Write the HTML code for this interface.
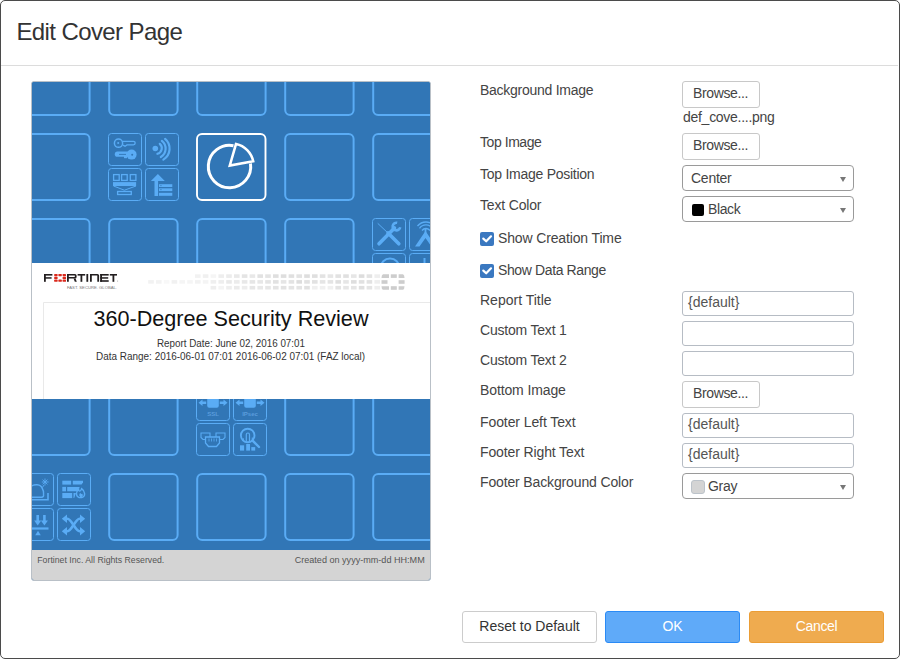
<!DOCTYPE html>
<html><head><meta charset="utf-8">
<style>
*{box-sizing:border-box;margin:0;padding:0}
html,body{width:900px;height:659px;background:#fff;overflow:hidden;font-family:"Liberation Sans",sans-serif;color:#333}
.dlg{position:absolute;left:0;top:0;width:900px;height:659px;background:#fff}
.frame{position:absolute;left:0;top:0;width:900px;height:659px;border:1px solid #4b4b4b;border-radius:5px;z-index:10;pointer-events:none}
.t{position:absolute;white-space:nowrap;line-height:1}
.hdr{position:absolute;left:1px;top:65px;width:897px;height:1px;background:#dcdcdc}
.lbl{font-size:14px;color:#444}
.btn{position:absolute;border:1px solid #c8c8c8;border-radius:3px;background:#fff}
.inp{position:absolute;left:682px;width:172px;height:25px;border:1px solid #b6bcc4;border-radius:3px;background:#fff}
.sel{position:absolute;left:682px;width:172px;height:26px;border:1px solid #9a9a9a;border-radius:4px;background:#fff}
.arr{position:absolute;left:157px;top:11px;width:0;height:0;border-left:3px solid transparent;border-right:3px solid transparent;border-top:5px solid #777}
.chk{position:absolute;left:480px;width:14px;height:14px;background:#3a78c0;border-radius:2px}
.fbtn{position:absolute;top:611px;height:32px;width:135px;border-radius:3px;font-size:14px;line-height:28px;text-align:center}
.prev{position:absolute;left:31px;top:81px;width:400px;height:500px;border:1px solid #b9c0c7;border-radius:3px;overflow:hidden;background:#3176b6}
</style></head><body>
<div class="dlg">
  <div class="t" style="left:16.4px;top:20px;font-size:24px;color:#333;letter-spacing:-0.6px">Edit Cover Page</div>
  <div class="hdr"></div>

  <div class="prev" id="prev">
<svg width="398" height="498" viewBox="32 82 398 498" style="position:absolute;left:0;top:0;font-family:'Liberation Sans',sans-serif">
<rect x="32" y="82" width="398" height="468" fill="#3176b6"/>
<rect x="21.2" y="49.1" width="68.4" height="66" rx="5" fill="none" stroke="#5aacf5" stroke-width="2"/>
<rect x="109.2" y="49.1" width="68.4" height="66" rx="5" fill="none" stroke="#5aacf5" stroke-width="2"/>
<rect x="197.2" y="49.1" width="68.4" height="66" rx="5" fill="none" stroke="#5aacf5" stroke-width="2"/>
<rect x="285.2" y="49.1" width="68.4" height="66" rx="5" fill="none" stroke="#5aacf5" stroke-width="2"/>
<rect x="373.2" y="49.1" width="68.4" height="66" rx="5" fill="none" stroke="#5aacf5" stroke-width="2"/>
<rect x="21.2" y="134.1" width="68.4" height="66" rx="5" fill="none" stroke="#5aacf5" stroke-width="2"/>
<rect x="108.5" y="133.5" width="33" height="32" rx="3" fill="none" stroke="#5aacf5" stroke-width="1"/>
<rect x="145.5" y="133.5" width="33" height="32" rx="3" fill="none" stroke="#5aacf5" stroke-width="1"/>
<rect x="108.5" y="168.5" width="33" height="32" rx="3" fill="none" stroke="#5aacf5" stroke-width="1"/>
<rect x="145.5" y="168.5" width="33" height="32" rx="3" fill="none" stroke="#5aacf5" stroke-width="1"/>
<rect x="197" y="134" width="68.5" height="66" rx="5" fill="none" stroke="#fff" stroke-width="1.9"/>
<rect x="285.2" y="134.1" width="68.4" height="66" rx="5" fill="none" stroke="#5aacf5" stroke-width="2"/>
<rect x="373.2" y="134.1" width="68.4" height="66" rx="5" fill="none" stroke="#5aacf5" stroke-width="2"/>
<rect x="21.2" y="219.1" width="68.4" height="66" rx="5" fill="none" stroke="#5aacf5" stroke-width="2"/>
<rect x="109.2" y="219.1" width="68.4" height="66" rx="5" fill="none" stroke="#5aacf5" stroke-width="2"/>
<rect x="197.2" y="219.1" width="68.4" height="66" rx="5" fill="none" stroke="#5aacf5" stroke-width="2"/>
<rect x="285.2" y="219.1" width="68.4" height="66" rx="5" fill="none" stroke="#5aacf5" stroke-width="2"/>
<rect x="372.5" y="218.5" width="33" height="32" rx="3" fill="none" stroke="#5aacf5" stroke-width="1"/>
<rect x="409.5" y="218.5" width="33" height="32" rx="3" fill="none" stroke="#5aacf5" stroke-width="1"/>
<rect x="372.5" y="253.5" width="33" height="32" rx="3" fill="none" stroke="#5aacf5" stroke-width="1"/>
<rect x="409.5" y="253.5" width="33" height="32" rx="3" fill="none" stroke="#5aacf5" stroke-width="1"/>
<rect x="21.2" y="304.1" width="68.4" height="66" rx="5" fill="none" stroke="#5aacf5" stroke-width="2"/>
<rect x="109.2" y="304.1" width="68.4" height="66" rx="5" fill="none" stroke="#5aacf5" stroke-width="2"/>
<rect x="197.2" y="304.1" width="68.4" height="66" rx="5" fill="none" stroke="#5aacf5" stroke-width="2"/>
<rect x="285.2" y="304.1" width="68.4" height="66" rx="5" fill="none" stroke="#5aacf5" stroke-width="2"/>
<rect x="373.2" y="304.1" width="68.4" height="66" rx="5" fill="none" stroke="#5aacf5" stroke-width="2"/>
<rect x="21.2" y="389.1" width="68.4" height="66" rx="5" fill="none" stroke="#5aacf5" stroke-width="2"/>
<rect x="109.2" y="389.1" width="68.4" height="66" rx="5" fill="none" stroke="#5aacf5" stroke-width="2"/>
<rect x="196.5" y="388.5" width="33" height="32" rx="3" fill="none" stroke="#5aacf5" stroke-width="1"/>
<rect x="233.5" y="388.5" width="33" height="32" rx="3" fill="none" stroke="#5aacf5" stroke-width="1"/>
<rect x="196.5" y="423.5" width="33" height="32" rx="3" fill="none" stroke="#5aacf5" stroke-width="1"/>
<rect x="233.5" y="423.5" width="33" height="32" rx="3" fill="none" stroke="#5aacf5" stroke-width="1"/>
<rect x="285.2" y="389.1" width="68.4" height="66" rx="5" fill="none" stroke="#5aacf5" stroke-width="2"/>
<rect x="373.2" y="389.1" width="68.4" height="66" rx="5" fill="none" stroke="#5aacf5" stroke-width="2"/>
<rect x="20.5" y="473.5" width="33" height="32" rx="3" fill="none" stroke="#5aacf5" stroke-width="1"/>
<rect x="57.5" y="473.5" width="33" height="32" rx="3" fill="none" stroke="#5aacf5" stroke-width="1"/>
<rect x="20.5" y="508.5" width="33" height="32" rx="3" fill="none" stroke="#5aacf5" stroke-width="1"/>
<rect x="57.5" y="508.5" width="33" height="32" rx="3" fill="none" stroke="#5aacf5" stroke-width="1"/>
<rect x="109.2" y="474.1" width="68.4" height="66" rx="5" fill="none" stroke="#5aacf5" stroke-width="2"/>
<rect x="197.2" y="474.1" width="68.4" height="66" rx="5" fill="none" stroke="#5aacf5" stroke-width="2"/>
<rect x="285.2" y="474.1" width="68.4" height="66" rx="5" fill="none" stroke="#5aacf5" stroke-width="2"/>
<rect x="373.2" y="474.1" width="68.4" height="66" rx="5" fill="none" stroke="#5aacf5" stroke-width="2"/>
<g fill="none" stroke="#5aacf5" stroke-width="1.5"><circle cx="118.5" cy="143.2" r="4.1"/></g>
<circle cx="118.2" cy="143.1" r="1" fill="#5aacf5"/>
<path d="M122.8 141.3 H133.4 A1.8 1.8 0 0 1 133.4 144.9 H127 L125 146.2 L123 145.2" fill="none" stroke="#5aacf5" stroke-width="1.3"/>
<g fill="#5aacf5"><rect x="114.8" y="151.6" width="15" height="5.2" rx="2.6"/><circle cx="131.6" cy="154.6" r="5"/><rect x="124" y="156" width="3" height="2.2"/></g>
<g fill="#3176b6"><rect x="119" y="153.9" width="7" height="0.9"/><circle cx="132.2" cy="154.8" r="1"/></g>
<circle cx="155.3" cy="148.5" r="2.8" fill="#5aacf5"/>
<g fill="none" stroke="#5aacf5" stroke-width="2.2" stroke-linecap="round"><path d="M159.8 143.8 A5.8 5.8 0 0 1 157.4 153.8"/><path d="M161.9 140.9 A9.8 9.8 0 0 1 160.8 157"/><path d="M165.1 138.9 A12.8 12.8 0 0 1 163.4 159.6"/></g>
<g fill="none" stroke="#5aacf5" stroke-width="1.3"><rect x="113.6" y="174.6" width="5.6" height="5.8"/><rect x="121.6" y="174.6" width="5.6" height="5.8"/><rect x="130.3" y="174.6" width="5.6" height="5.8"/><rect x="117.6" y="191.5" width="13.7" height="3"/></g>
<rect x="113" y="182.1" width="23.1" height="3.9" fill="#5aacf5"/>
<path d="M113.5 186 L124.4 190.2 L136 186" fill="none" stroke="#5aacf5" stroke-width="1"/>
<path d="M157.9 173.9 L164.8 180.9 H158.1 V196 H154.5 V180.9 H150.9 Z" fill="#5aacf5"/>
<g fill="#5aacf5"><rect x="159" y="184.2" width="13.3" height="2.8"/><rect x="159" y="188.3" width="13.3" height="2.8"/><rect x="159" y="192.8" width="13.3" height="3"/></g>
<g fill="#3a82c4"><rect x="160.2" y="185.2" width="1.4" height="0.9"/><rect x="160.2" y="189.2" width="1.4" height="0.9"/></g>
<path d="M233.5 145.7 A21.2 21.2 0 1 0 250.5 163.5" fill="none" stroke="#fff" stroke-width="3"/>
<path d="M229.8 165.5 L236 144 A22 22 0 0 1 253.2 161.3 Z" fill="none" stroke="#fff" stroke-width="2.6" stroke-linejoin="miter"/>
<g stroke="#5aacf5" stroke-linecap="round" fill="none"><path d="M378 223.6 L389 234" stroke-width="1"/><path d="M388 233 L398.8 243.8" stroke-width="3.6"/><path d="M379 243.8 L394.5 228" stroke-width="3.6"/></g>
<path d="M400.2 227.2 A3.8 3.8 0 1 1 397.2 222.8" fill="none" stroke="#5aacf5" stroke-width="2.6"/>
<path d="M425.5 231 L415 246.5 H419.5 L425.5 238 L431.5 246.5 H436 Z" fill="#5aacf5"/>
<g fill="none" stroke="#5aacf5" stroke-width="1.3"><path d="M422 230.5 A5 5 0 0 1 430 230.5"/><path d="M419.5 228.3 A8 8 0 0 1 432.5 228.3"/><path d="M417.5 226 A11 11 0 0 1 434.5 226"/></g>
<rect x="424.6" y="229" width="1.8" height="6" fill="#5aacf5"/>
<path d="M380.5 268 A9.5 9.5 0 0 1 399.5 268" fill="none" stroke="#5aacf5" stroke-width="2"/>
<rect x="423.5" y="258" width="2" height="6" fill="#5aacf5"/>
<rect x="207.2" y="395" width="11.6" height="12.7" rx="2" fill="#5aacf5"/>
<path d="M206.2 402.8 H202 M219.8 402.8 H224" stroke="#5aacf5" stroke-width="2.4"/>
<path d="M198.5 402.8 L202.5 399.6 V406 Z M227.5 402.8 L223.5 399.6 V406 Z" fill="#5aacf5"/>
<text x="213" y="415.6" font-size="6.0" font-weight="bold" fill="#5a9cdc" text-anchor="middle">SSL</text>
<rect x="244.2" y="395" width="11.6" height="12.7" rx="2" fill="#5aacf5"/>
<path d="M243.2 402.8 H239 M256.8 402.8 H261" stroke="#5aacf5" stroke-width="2.4"/>
<path d="M235.5 402.8 L239.5 399.6 V406 Z M264.5 402.8 L260.5 399.6 V406 Z" fill="#5aacf5"/>
<text x="250" y="415.6" font-size="6.0" font-weight="bold" fill="#5a9cdc" text-anchor="middle">IPsec</text>
<g fill="none" stroke="#5aacf5" stroke-width="1.1"><path d="M201 433 H210 V437.5 L208 439.5 H203 L201 437.5 Z"/><path d="M216 433 H225 V437.5 L223 439.5 H218 L216 437.5 Z"/></g>
<path d="M205.5 437 H219.5 V443 L216.5 446.5 H208.5 L205.5 443 Z" fill="#3176b6" stroke="#5aacf5" stroke-width="1.3"/>
<g stroke="#5aacf5" stroke-width="0.8"><path d="M209 438.5 V441.5 M211.5 438.5 V441.5 M214 438.5 V441.5 M216.5 438.5 V441.5"/></g>
<circle cx="247.7" cy="435.5" r="6.8" fill="none" stroke="#5aacf5" stroke-width="1.9"/>
<path d="M252.6 440.6 L259 447" stroke="#5aacf5" stroke-width="2.4" stroke-linecap="round"/>
<path d="M246.3 441.5 V434.6 A1.6 1.6 0 0 1 249.5 434.6 V441.5" fill="none" stroke="#5aacf5" stroke-width="1.2"/><path d="M243.3 441 V438.2 M252.3 441 V437.6" stroke="#5aacf5" stroke-width="1.1"/>
<g fill="#5aacf5"><rect x="240" y="445.3" width="4.1" height="5.3"/><rect x="246.2" y="444" width="3.8" height="6.6"/><rect x="251.3" y="447.1" width="3.9" height="3.5"/></g>
<path d="M30 497.2 H41.5 Q44 497.2 43.5 494.5 Q43.8 491 42.5 489 Q41.5 485.2 37 484.8 Q32 484.6 30 487.5" fill="none" stroke="#5aacf5" stroke-width="1.4"/>
<path d="M30 499.8 H48 V493" fill="none" stroke="#5aacf5" stroke-width="1.6"/>
<g stroke="#5aacf5" stroke-width="0.9"><path d="M45 478.5 V485.5 M41.8 482 H48.6 M42.6 479.6 L47.4 484.4 M47.4 479.6 L42.6 484.4 M42.5 487.5 L44 485"/></g>
<g fill="#5aacf5"><rect x="62.3" y="480.7" width="8.8" height="3.9"/><path d="M72.8 480.7 H83 V482.6 L81.6 484.6 H72.8 Z"/><rect x="62.3" y="486.9" width="3.7" height="4.4"/><path d="M67.2 486.9 H79.8 L77.3 491.3 H67.2 Z"/><rect x="62.3" y="493" width="9.9" height="5.1"/><path d="M73.5 493 H76 L74.2 498.1 H73.5 Z"/></g>
<path d="M79.2 497.6 C75.8 496.6 75.6 492 78.6 489.2 C78.8 491.6 80.6 492 81.6 488.6 C85.2 491 86 496.6 81.8 497.6 Z" fill="none" stroke="#5aacf5" stroke-width="1.4"/>
<path d="M80.2 497 C78.8 496 79 494 80.4 492.8 C80.8 494.2 81.6 494.4 82 493.4 C83.2 494.6 83.2 496.4 81.6 497 Z" fill="#5aacf5"/>
<g fill="#5aacf5"><rect x="36.4" y="515" width="2.6" height="6.5"/><path d="M34.2 520.5 H41.2 L37.7 525.5 Z"/><rect x="43.1" y="515" width="2.6" height="6.5"/><path d="M40.9 520.5 H47.9 L44.4 525.5 Z"/><rect x="30" y="527.4" width="18.5" height="2.2"/><path d="M35.2 535.2 L38 530.8 L40.8 535.2 Z"/></g>
<g fill="none" stroke="#5aacf5" stroke-width="2.6"><path d="M65 518.8 H67.5 C71.5 518.8 75.5 531.2 79.5 531.2 H81"/><path d="M65 531.2 H67.5 C71.5 531.2 75.5 518.8 79.5 518.8 H81"/></g>
<g fill="#5aacf5"><path d="M80 514.6 L85.2 518.8 L80 523 Z"/><path d="M80 527 L85.2 531.2 L80 535.4 Z"/><path d="M67 514.6 L61.8 518.8 L67 523 Z"/><path d="M67 527 L61.8 531.2 L67 535.4 Z"/></g>
<rect x="32" y="263" width="398" height="136" fill="#fff"/>
<path d="M43.5 399 V302.5 H432" fill="none" stroke="#e9e9e9" stroke-width="1"/>
<g fill="#231f20"><rect x="44" y="274" width="1.8" height="7.8"/><rect x="44" y="274" width="8.4" height="1.6"/><rect x="44" y="277.2" width="7.6" height="1.5"/><path d="M67 274 H75 Q76.6 274 76.6 275.6 V277 Q76.6 278.6 75 278.6 H68.8 V281.8 H67 Z M68.8 275.6 V277 H74.8 V275.6 Z" fill-rule="evenodd"/><path d="M73.6 278.6 H75.6 L76.8 281.8 H74.8 Z"/><rect x="77.6" y="274" width="7.6" height="1.6"/><rect x="80.5" y="274" width="1.8" height="7.8"/><rect x="86.4" y="274" width="1.8" height="7.8"/><path d="M90 274 H97.5 Q99.1 274 99.1 275.6 V281.8 H97.3 V275.6 H91.8 V281.8 H90 Z"/><rect x="100.2" y="274" width="1.8" height="7.8"/><rect x="100.2" y="274" width="8.5" height="1.6"/><rect x="100.2" y="277.2" width="8" height="1.5"/><rect x="100.2" y="280.2" width="8.5" height="1.6"/><rect x="109.8" y="274" width="7.2" height="1.6"/><rect x="112.5" y="274" width="1.8" height="7.8"/><circle cx="117.6" cy="281" r="0.5" fill="#999"/></g>
<g fill="#da291c"><rect x="54.2" y="274" width="3.4" height="2.2" rx="0.6"/><rect x="58.4" y="274" width="3.4" height="2.2" rx="0.6"/><rect x="62.6" y="274" width="3.4" height="2.2" rx="0.6"/><rect x="54.2" y="276.8" width="3.4" height="2.2" rx="0.6"/><rect x="62.6" y="276.8" width="3.4" height="2.2" rx="0.6"/><rect x="54.2" y="279.6" width="3.4" height="2.2" rx="0.6"/><rect x="58.4" y="279.6" width="3.4" height="2.2" rx="0.6"/><rect x="62.6" y="279.6" width="3.4" height="2.2" rx="0.6"/></g>
<text x="67" y="289.3" font-size="3.8" fill="#777" textLength="50" lengthAdjust="spacingAndGlyphs">FAST. SECURE. GLOBAL.</text>
<rect x="195.0" y="274.3" width="5.6" height="3.6" fill="rgb(242,242,242)"/>
<rect x="202.8" y="274.3" width="5.6" height="3.6" fill="rgb(240,240,240)"/>
<rect x="210.6" y="274.3" width="5.6" height="3.6" fill="rgb(245,245,245)"/>
<rect x="218.4" y="274.3" width="5.6" height="3.6" fill="rgb(238,238,238)"/>
<rect x="226.2" y="274.3" width="5.6" height="3.6" fill="rgb(236,236,236)"/>
<rect x="234.0" y="274.3" width="5.6" height="3.6" fill="rgb(233,233,233)"/>
<rect x="241.8" y="274.3" width="5.6" height="3.6" fill="rgb(228,228,228)"/>
<rect x="249.6" y="274.3" width="5.6" height="3.6" fill="rgb(232,232,232)"/>
<rect x="257.4" y="274.3" width="5.6" height="3.6" fill="rgb(226,226,226)"/>
<rect x="265.2" y="274.3" width="5.6" height="3.6" fill="rgb(228,228,228)"/>
<rect x="273.0" y="274.3" width="5.6" height="3.6" fill="rgb(223,223,223)"/>
<rect x="280.8" y="274.3" width="5.6" height="3.6" fill="rgb(222,222,222)"/>
<rect x="288.6" y="274.3" width="5.6" height="3.6" fill="rgb(224,224,224)"/>
<rect x="296.4" y="274.3" width="5.6" height="3.6" fill="rgb(227,227,227)"/>
<rect x="304.2" y="274.3" width="5.6" height="3.6" fill="rgb(222,222,222)"/>
<rect x="312.0" y="274.3" width="5.6" height="3.6" fill="rgb(223,223,223)"/>
<rect x="319.8" y="274.3" width="5.6" height="3.6" fill="rgb(227,227,227)"/>
<rect x="327.6" y="274.3" width="5.6" height="3.6" fill="rgb(230,230,230)"/>
<rect x="335.4" y="274.3" width="5.6" height="3.6" fill="rgb(226,226,226)"/>
<rect x="343.2" y="274.3" width="5.6" height="3.6" fill="rgb(224,224,224)"/>
<rect x="351.0" y="274.3" width="5.6" height="3.6" fill="rgb(230,230,230)"/>
<rect x="358.8" y="274.3" width="5.6" height="3.6" fill="rgb(221,221,221)"/>
<rect x="366.6" y="274.3" width="5.6" height="3.6" fill="rgb(227,227,227)"/>
<rect x="374.4" y="274.3" width="5.6" height="3.6" fill="rgb(238,238,238)"/>
<rect x="148.2" y="280.1" width="5.6" height="3.6" fill="rgb(242,242,242)"/>
<rect x="156.0" y="280.1" width="5.6" height="3.6" fill="rgb(243,243,243)"/>
<rect x="163.8" y="280.1" width="5.6" height="3.6" fill="rgb(248,248,248)"/>
<rect x="171.6" y="280.1" width="5.6" height="3.6" fill="rgb(241,241,241)"/>
<rect x="179.4" y="280.1" width="5.6" height="3.6" fill="rgb(245,245,245)"/>
<rect x="187.2" y="280.1" width="5.6" height="3.6" fill="rgb(245,245,245)"/>
<rect x="195.0" y="280.1" width="5.6" height="3.6" fill="rgb(242,242,242)"/>
<rect x="202.8" y="280.1" width="5.6" height="3.6" fill="rgb(244,244,244)"/>
<rect x="210.6" y="280.1" width="5.6" height="3.6" fill="rgb(239,239,239)"/>
<rect x="218.4" y="280.1" width="5.6" height="3.6" fill="rgb(238,238,238)"/>
<rect x="226.2" y="280.1" width="5.6" height="3.6" fill="rgb(233,233,233)"/>
<rect x="234.0" y="280.1" width="5.6" height="3.6" fill="rgb(236,236,236)"/>
<rect x="241.8" y="280.1" width="5.6" height="3.6" fill="rgb(232,232,232)"/>
<rect x="249.6" y="280.1" width="5.6" height="3.6" fill="rgb(230,230,230)"/>
<rect x="257.4" y="280.1" width="5.6" height="3.6" fill="rgb(231,231,231)"/>
<rect x="265.2" y="280.1" width="5.6" height="3.6" fill="rgb(228,228,228)"/>
<rect x="273.0" y="280.1" width="5.6" height="3.6" fill="rgb(226,226,226)"/>
<rect x="280.8" y="280.1" width="5.6" height="3.6" fill="rgb(229,229,229)"/>
<rect x="288.6" y="280.1" width="5.6" height="3.6" fill="rgb(227,227,227)"/>
<rect x="296.4" y="280.1" width="5.6" height="3.6" fill="rgb(221,221,221)"/>
<rect x="304.2" y="280.1" width="5.6" height="3.6" fill="rgb(226,226,226)"/>
<rect x="312.0" y="280.1" width="5.6" height="3.6" fill="rgb(226,226,226)"/>
<rect x="319.8" y="280.1" width="5.6" height="3.6" fill="rgb(229,229,229)"/>
<rect x="327.6" y="280.1" width="5.6" height="3.6" fill="rgb(228,228,228)"/>
<rect x="335.4" y="280.1" width="5.6" height="3.6" fill="rgb(223,223,223)"/>
<rect x="343.2" y="280.1" width="5.6" height="3.6" fill="rgb(230,230,230)"/>
<rect x="351.0" y="280.1" width="5.6" height="3.6" fill="rgb(222,222,222)"/>
<rect x="358.8" y="280.1" width="5.6" height="3.6" fill="rgb(225,225,225)"/>
<rect x="366.6" y="280.1" width="5.6" height="3.6" fill="rgb(226,226,226)"/>
<rect x="374.4" y="280.1" width="5.6" height="3.6" fill="rgb(238,238,238)"/>
<rect x="210.6" y="285.9" width="5.6" height="3.6" fill="rgb(238,238,238)"/>
<rect x="218.4" y="285.9" width="5.6" height="3.6" fill="rgb(244,244,244)"/>
<rect x="226.2" y="285.9" width="5.6" height="3.6" fill="rgb(238,238,238)"/>
<rect x="234.0" y="285.9" width="5.6" height="3.6" fill="rgb(235,235,235)"/>
<rect x="241.8" y="285.9" width="5.6" height="3.6" fill="rgb(237,237,237)"/>
<rect x="249.6" y="285.9" width="5.6" height="3.6" fill="rgb(230,230,230)"/>
<rect x="257.4" y="285.9" width="5.6" height="3.6" fill="rgb(232,232,232)"/>
<rect x="265.2" y="285.9" width="5.6" height="3.6" fill="rgb(230,230,230)"/>
<rect x="273.0" y="285.9" width="5.6" height="3.6" fill="rgb(228,228,228)"/>
<rect x="280.8" y="285.9" width="5.6" height="3.6" fill="rgb(226,226,226)"/>
<rect x="288.6" y="285.9" width="5.6" height="3.6" fill="rgb(228,228,228)"/>
<rect x="296.4" y="285.9" width="5.6" height="3.6" fill="rgb(228,228,228)"/>
<rect x="304.2" y="285.9" width="5.6" height="3.6" fill="rgb(225,225,225)"/>
<rect x="312.0" y="285.9" width="5.6" height="3.6" fill="rgb(240,240,240)"/>
<rect x="319.8" y="285.9" width="5.6" height="3.6" fill="rgb(240,240,240)"/>
<rect x="327.6" y="285.9" width="5.6" height="3.6" fill="rgb(240,240,240)"/>
<rect x="335.4" y="285.9" width="5.6" height="3.6" fill="rgb(227,227,227)"/>
<rect x="343.2" y="285.9" width="5.6" height="3.6" fill="rgb(230,230,230)"/>
<rect x="351.0" y="285.9" width="5.6" height="3.6" fill="rgb(229,229,229)"/>
<rect x="358.8" y="285.9" width="5.6" height="3.6" fill="rgb(223,223,223)"/>
<rect x="366.6" y="285.9" width="5.6" height="3.6" fill="rgb(228,228,228)"/>
<rect x="374.4" y="285.9" width="5.6" height="3.6" fill="rgb(238,238,238)"/>
<g fill="#cdcdcd"><path d="M383 274.3 H389 V277.9 H381.5 Q381.5 275 383 274.3 Z"/><rect x="390.8" y="274.3" width="6" height="3.6"/><path d="M398.6 274.3 H403 Q404.5 275 404.5 277.9 H398.6 Z"/><rect x="381.5" y="280.2" width="6" height="3.6"/><rect x="398.6" y="280.2" width="6" height="3.6"/><path d="M381.5 286.2 H389 V289.8 H383 Q381.5 289 381.5 286.2 Z"/><rect x="390.8" y="286.2" width="6" height="3.6"/><path d="M398.6 286.2 H404.5 Q404.5 289 403 289.8 H398.6 Z"/></g>
<text x="231" y="325.8" font-size="22" fill="#111" text-anchor="middle" textLength="275" lengthAdjust="spacingAndGlyphs">360-Degree Security Review</text>
<text x="231" y="346.8" font-size="10" fill="#333" text-anchor="middle" textLength="148" lengthAdjust="spacingAndGlyphs">Report Date: June 02, 2016 07:01</text>
<text x="230.6" y="359.7" font-size="10" fill="#333" text-anchor="middle" textLength="269" lengthAdjust="spacingAndGlyphs">Data Range: 2016-06-01 07:01 2016-06-02 07:01 (FAZ local)</text>
<rect x="32" y="550" width="398" height="30" fill="#d4d4d4"/>
<text x="37.3" y="563" font-size="9.9" fill="#555" textLength="127" lengthAdjust="spacingAndGlyphs">Fortinet Inc. All Rights Reserved.</text>
<text x="424.7" y="563" font-size="9.9" fill="#555" text-anchor="end" textLength="130" lengthAdjust="spacingAndGlyphs">Created on yyyy-mm-dd HH:MM</text>
</svg>
  </div>

  <!-- labels -->
  <div class="t lbl" style="left:480px;top:83px;letter-spacing:-0.27px">Background Image</div>
  <div class="t lbl" style="left:480px;top:135px;letter-spacing:-0.44px">Top Image</div>
  <div class="t lbl" style="left:480px;top:167px;letter-spacing:-0.26px">Top Image Position</div>
  <div class="t lbl" style="left:480px;top:198px;letter-spacing:-0.17px">Text Color</div>
  <div class="t lbl" style="left:498px;top:231px;letter-spacing:-0.14px">Show Creation Time</div>
  <div class="t lbl" style="left:498px;top:263px;letter-spacing:-0.38px">Show Data Range</div>
  <div class="t lbl" style="left:480px;top:293px">Report Title</div>
  <div class="t lbl" style="left:480px;top:323px;letter-spacing:-0.2px">Custom Text 1</div>
  <div class="t lbl" style="left:480px;top:353px;letter-spacing:-0.2px">Custom Text 2</div>
  <div class="t lbl" style="left:480px;top:383px;letter-spacing:-0.12px">Bottom Image</div>
  <div class="t lbl" style="left:480px;top:415px;letter-spacing:-0.09px">Footer Left Text</div>
  <div class="t lbl" style="left:480px;top:445px;letter-spacing:-0.12px">Footer Right Text</div>
  <div class="t lbl" style="left:480px;top:475px;letter-spacing:-0.14px">Footer Background Color</div>

  <div class="chk" style="top:232px"><svg width="14" height="14" viewBox="0 0 14 14"><path d="M3.3 6.6 L6.2 9.3 L11 4.3" fill="none" stroke="#fff" stroke-width="2.2" stroke-linecap="round" stroke-linejoin="round"/></svg></div>
  <div class="chk" style="top:264px"><svg width="14" height="14" viewBox="0 0 14 14"><path d="M3.3 6.6 L6.2 9.3 L11 4.3" fill="none" stroke="#fff" stroke-width="2.2" stroke-linecap="round" stroke-linejoin="round"/></svg></div>

  <!-- controls -->
  <div class="btn" style="left:682px;top:81px;width:78px;height:27px"></div>
  <div class="t lbl" style="left:693px;top:86px;letter-spacing:-0.37px">Browse...</div>
  <div class="t lbl" style="left:683px;top:110px;letter-spacing:-0.28px">def_cove....png</div>
  <div class="btn" style="left:682px;top:133px;width:78px;height:27px"></div>
  <div class="t lbl" style="left:693px;top:138px;letter-spacing:-0.37px">Browse...</div>

  <div class="sel" style="top:165px"><div class="arr"></div></div>
  <div class="t lbl" style="left:691px;top:171px;letter-spacing:-0.25px">Center</div>
  <div class="sel" style="top:196px"><div class="arr"></div></div>
  <div style="position:absolute;left:692px;top:204px;width:12px;height:12px;background:#000;border-radius:2px"></div>
  <div class="t lbl" style="left:708px;top:202px;letter-spacing:-0.37px">Black</div>

  <div class="inp" style="top:291px"></div>
  <div class="t lbl" style="left:688px;top:295px;color:#555">{default}</div>
  <div class="inp" style="top:321px"></div>
  <div class="inp" style="top:351px"></div>
  <div class="btn" style="left:682px;top:381px;width:78px;height:27px"></div>
  <div class="t lbl" style="left:693px;top:386px;letter-spacing:-0.37px">Browse...</div>
  <div class="inp" style="top:413px"></div>
  <div class="t lbl" style="left:688px;top:417px;color:#555">{default}</div>
  <div class="inp" style="top:443px"></div>
  <div class="t lbl" style="left:688px;top:447px;color:#555">{default}</div>
  <div class="sel" style="top:473px"><div class="arr"></div></div>
  <div style="position:absolute;left:691px;top:480px;width:14px;height:14px;background:#d4d4d4;border:1px solid #bcc3ca;border-radius:3px"></div>
  <div class="t lbl" style="left:708px;top:479px;letter-spacing:-0.3px">Gray</div>

  <!-- footer buttons -->
  <div class="fbtn" style="left:462px;border:1px solid #ccc;background:#fff;color:#333">Reset to Default</div>
  <div class="fbtn" style="left:605px;border:1px solid #2a8af5;background:#5faaf9;color:#fff">OK</div>
  <div class="fbtn" style="left:749px;border:1px solid #eb9d35;background:#efab4f;color:#fff;letter-spacing:-0.35px">Cancel</div>
</div>
<div class="frame"></div>
</body></html>
